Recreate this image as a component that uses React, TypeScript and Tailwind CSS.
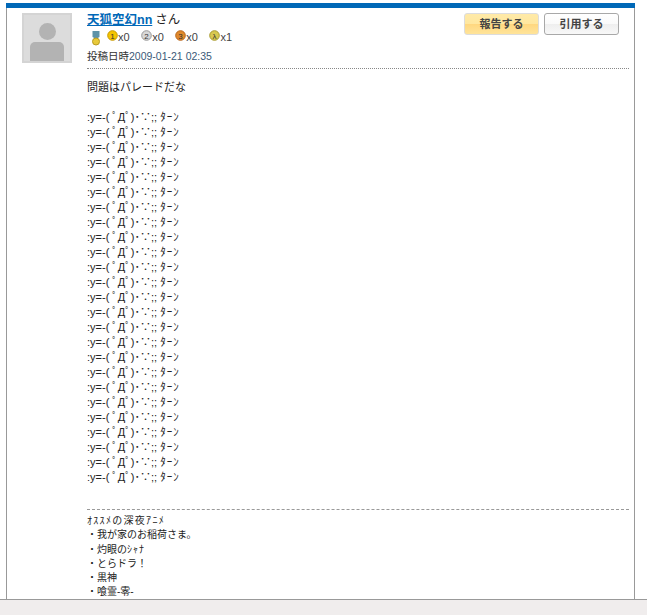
const font = { fontFamily: '"Liberation Sans", "Noto Sans CJK JP", sans-serif' };

function Medal({ bg, ring, label }: { bg: string; ring: string; label: string }) {
  return (
    <svg width="11" height="11" viewBox="0 0 11 11" className="shrink-0 mb-[3px]">
      <circle cx="5.5" cy="5.5" r="4.8" fill={bg} stroke={ring} strokeWidth="1" />
      <text x="5.5" y="8.500" textAnchor="middle" fontSize="8" fill="#333" fontFamily="Liberation Sans">{label}</text>
    </svg>
  );
}

const rows = Array.from({ length: 25 });

export default function App() {
  return (
    <div style={font} className="w-[647px] h-[615px] overflow-hidden bg-white flex flex-col">
      <div className="h-[600px] shrink-0 pt-[3px] pl-[6px] border-b border-[#999999] overflow-hidden">
        <div className="w-[629px] h-full border-x border-[#999999]">
          <div className="h-[5px] bg-[#0068b7] -mx-px" />
          <div className="flex pt-[5px] pl-[15px] pr-[5px]">
            <div className="w-[50px] h-[50px] shrink-0 border-2 border-[#d4d4d4] bg-[#dcdcdc] flex flex-col items-center pt-[8px] overflow-hidden">
              <div className="w-[17px] h-[17px] rounded-full bg-[#b3b3b3] mb-[2px]" />
              <div className="w-[34px] h-[19px] rounded-t-[5px] bg-[#b3b3b3]" />
            </div>
            <div className="ml-[15px] flex-1 min-w-0">
              <div className="flex justify-between h-[56px] border-b border-dotted border-[#888888]">
                <div>
                  <div className="text-[12.500px] leading-[15px] text-[#222]">
                    <a className="text-[#0068b7] underline font-bold">天狐空幻nn</a><span className="ml-[3px]">さん</span>
                  </div>
                  <div className="flex items-end h-[16px] text-[11px] leading-[14px] text-[#444] pl-[5px]">
                    <svg width="8" height="15" viewBox="0 0 8 15" className="shrink-0 mr-[7px] mb-[-2px]">
                      <path d="M0.500 0h7v6L4 8 0.500 6z" fill="#5e93a8" />
                      <circle cx="4" cy="10.500" r="3.500" fill="#e8c93a" stroke="#b89b20" />
                    </svg>
                    <Medal bg="#f5c400" ring="#c79a00" label="1" />
                    <span className="mr-[11.500px]">x0</span>
                    <Medal bg="#d8d8d8" ring="#999999" label="2" />
                    <span className="mr-[11.500px]">x0</span>
                    <Medal bg="#e08a2c" ring="#b8651a" label="3" />
                    <span className="mr-[11.500px]">x0</span>
                    <Medal bg="#d8c850" ring="#a89a30" label="λ" />
                    <span>x1</span>
                  </div>
                  <div className="text-[10.500px] leading-[13px] pt-[6px] text-[#333]">
                    投稿日時<span className="text-[#3a5a78]">2009-01-21 02:35</span>
                  </div>
                </div>
                <div className="flex gap-[5px] pr-[10px] items-start">
                  <button className="w-[75px] h-[22px] rounded-[3px] border border-[#dcdcdc] bg-[linear-gradient(#ffeaa8_0%,#ffe79f_50%,#ffd77f_50%,#ffe49a_100%)] text-[11px] font-bold text-[#444]">報告する</button>
                  <button className="w-[75px] h-[22px] rounded-[3px] border border-[#a8a8a8] bg-[linear-gradient(#ffffff_0%,#fafafa_50%,#eeeeee_50%,#f8f8f8_100%)] text-[11px] font-bold text-[#444]">引用する</button>
                </div>
              </div>
              <div className="text-[11px] leading-[15px] text-[#222] pt-[11px]">問題はパレードだな</div>
              <div className="text-[11px] leading-[15px] text-[#222] pt-[15px]">
                {rows.map((_, i) => (
                  <div key={i}>:y=-( ﾟДﾟ)･∵;; <span className="tracking-[1px]">ﾀｰﾝ</span></div>
                ))}
              </div>
              <div className="mt-[24px] border-t border-dashed border-[#999999] pt-[4px] text-[10px] leading-[14.300px] text-[#222]">
                <div className="tracking-[1.300px]">ｵｽｽﾒの深夜ｱﾆﾒ</div>
                <div>・我が家のお稲荷さま。</div>
                <div>・灼眼の<span className="tracking-[1px]">ｼｬﾅ</span></div>
                <div>・とらドラ！</div>
                <div>・黒神</div>
                <div>・喰霊-零-</div>
              </div>
            </div>
          </div>
        </div>
      </div>
      <div className="flex-1 bg-[#f0eded]" />
    </div>
  );
}
